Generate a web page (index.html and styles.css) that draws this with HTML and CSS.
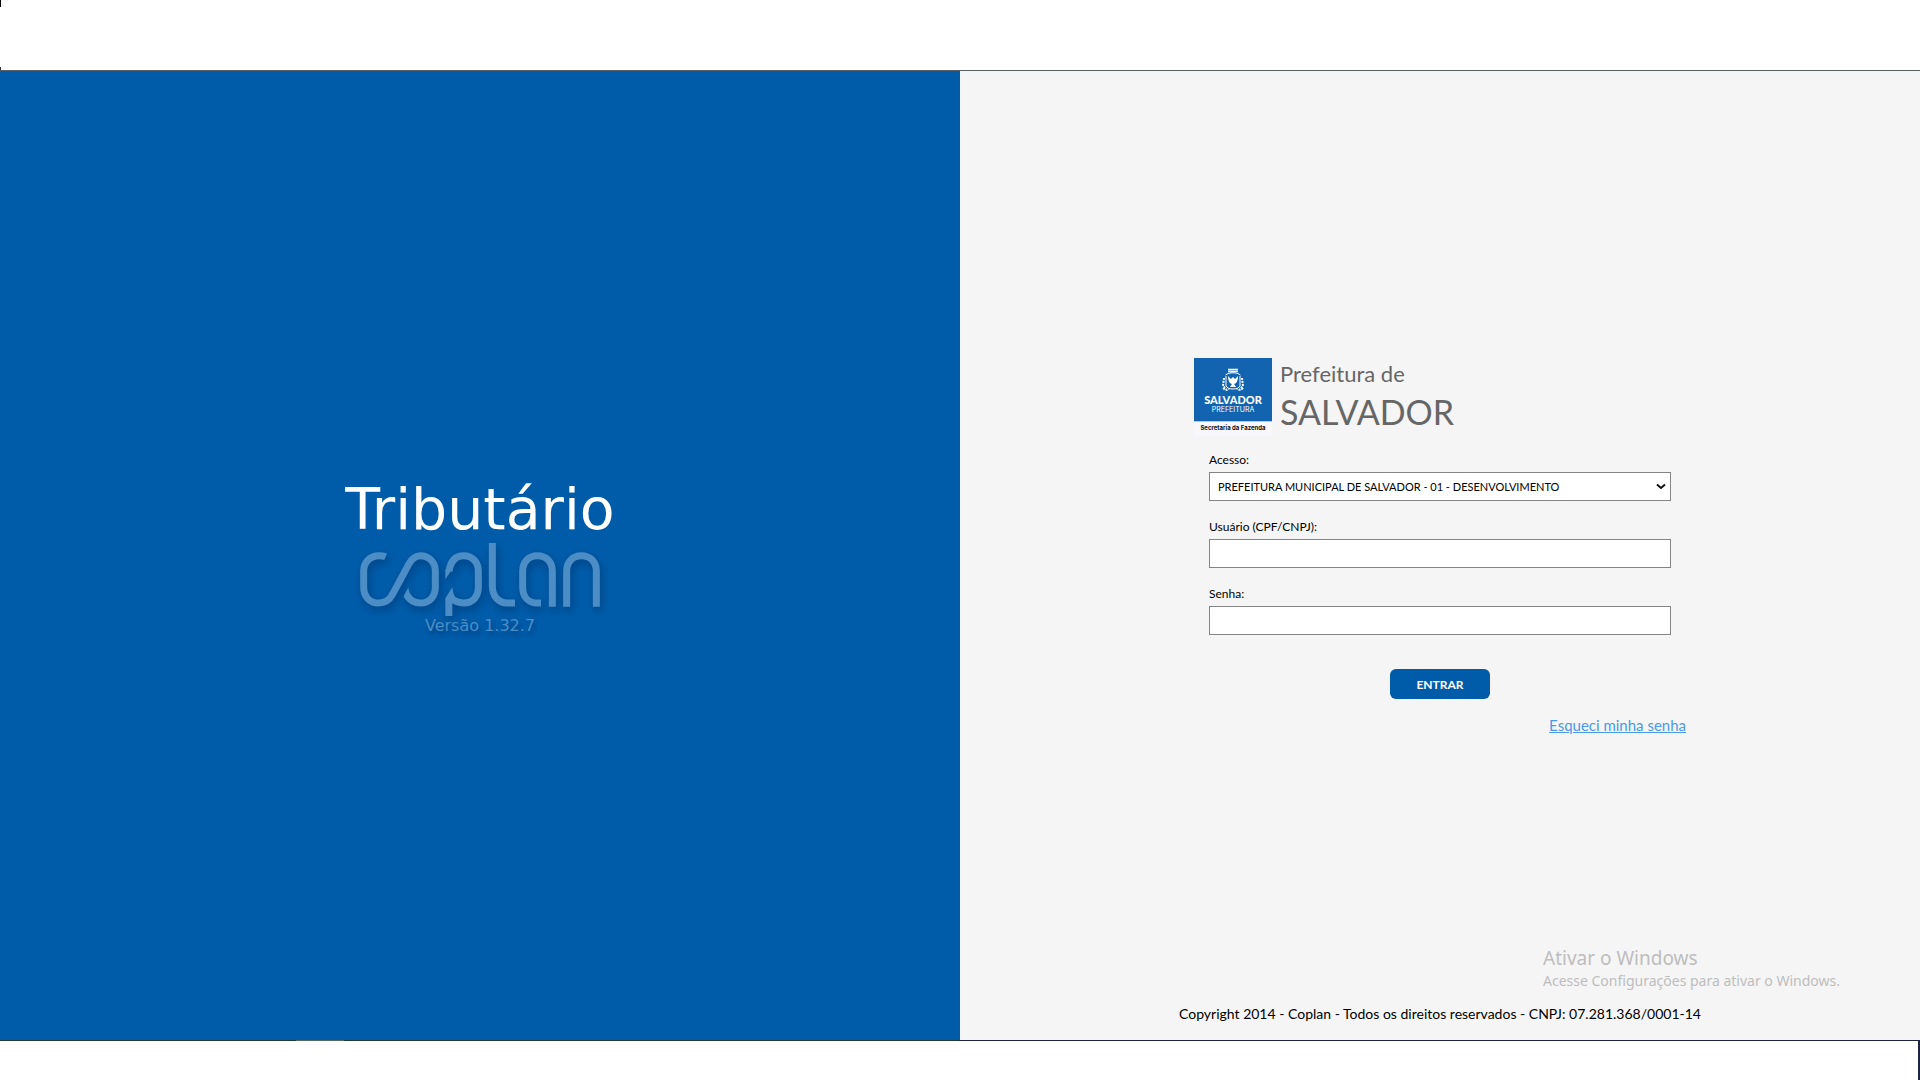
FILE: index.html
```html
<!DOCTYPE html>
<html lang="pt-BR">
<head>
<meta charset="utf-8">
<meta name="viewport" content="width=device-width, initial-scale=1">
<title>Tributário - Prefeitura de Salvador</title>
<link rel="stylesheet" href="styles.css">
</head>
<body>
<header class="top-strip"></header>
<main class="main">
  <section class="product">
    <h1 class="product-name">Tributário</h1>
    <svg class="coplan" viewBox="90 219 720 219" role="img" aria-label="Coplan">
      <g fill="none" stroke="currentColor" stroke-width="21">
        <path d="M167 260C160 257 153 257 146 257C118 257 101 279 101 303V352C101 379 118 399 146 399C166 399 178 391 187 374L236 283C245 266 255 257 271 257C299 257 316 279 316 303V352C316 379 299 399 271 399C253 399 240 391 231 376"/>
        <path d="M357 304C361 277 374 257 401 257C429 257 445 279 445 303V352C445 379 429 399 401 399C386 399 372 393 361 382"/>
        <path d="M487 219V347C487 379 506 399 532 399H555"/>
        <path d="M633 399H622C594 399 578 379 578 350V303C578 277 595 257 622 257C650 257 667 277 667 303V410"/>
        <path d="M710 410V303C710 277 727 257 754 257C782 257 799 277 799 303V410"/>
      </g>
      <g fill="currentColor">
        <path d="M235 352L221 379L229 391L245 378C239 371 236 363 235 352Z"/>
        <path d="M346 328V298L367 292Q366 298 363 303Z"/>
        <path d="M367 352L346 385V438H367V400L375 380Q368 370 367 352Z"/>
      </g>
    </svg>
    <p class="version">Versão 1.32.7</p>
  </section>
  <section class="access">
    <div class="login">
      <div class="brand">
        <svg class="brand-logo" viewBox="0 0 78 78" role="img" aria-label="Salvador Prefeitura">
          <rect width="78" height="78" fill="#f8f8fc"/>
          <rect width="78" height="63" fill="#1264b0"/>
          <rect y="63" width="78" height="1" fill="#a9c9e6"/>
          <g fill="none" stroke="#fff">
            <path d="M34 11.500h10M34 13.500h10" stroke-width="1.500"/>
            <path d="M31.500 17c4-3 11-3 15 0M32 18v10c2 4 12 4 14 0V18" stroke-width="1"/>
            <path d="M30 20l-1 8 3 3M48 20l1 8-3 3M29 30q3 3 6 1M49 30q-3 3-6 1" stroke-width="2" stroke-dasharray="2 1"/>
          </g>
          <path d="M34 18q0 7 4 8l-2 3h6l-2-3q4-1 4-8l-3 3-2-2-2 2Z" fill="#fff"/>
          <text x="39" y="46" class="logo-city">SALVADOR</text>
          <text x="39" y="54" class="logo-sub">PREFEITURA</text>
          <text x="39" y="72" class="logo-dept">Secretaria da Fazenda</text>
        </svg>
        <div class="brand-text">
          <p class="brand-kind">Prefeitura de</p>
          <p class="brand-city">SALVADOR</p>
        </div>
      </div>
      <form class="form">
        <div class="field">
          <label for="acesso">Acesso:</label>
          <div class="select-wrap">
            <select id="acesso" class="control"><option>PREFEITURA MUNICIPAL DE SALVADOR - 01 - DESENVOLVIMENTO</option></select>
            <svg class="chevron" viewBox="0 0 10 7" aria-hidden="true"><path d="M1 1.500L5 5L9 1.500" fill="none" stroke="#111" stroke-width="2"/></svg>
          </div>
        </div>
        <div class="field">
          <label for="usuario">Usuário (CPF/CNPJ):</label>
          <input id="usuario" class="control" type="text">
        </div>
        <div class="field">
          <label for="senha">Senha:</label>
          <input id="senha" class="control" type="password">
        </div>
        <button class="submit" type="button">ENTRAR</button>
      </form>
      <a class="forgot" href="#">Esqueci minha senha</a>
    </div>
    <p class="copyright">Copyright 2014 - Coplan - Todos os direitos reservados - CNPJ: 07.281.368/0001-14</p>
    <aside class="activation">
      <p class="activation-title">Ativar o Windows</p>
      <p class="activation-text">Acesse Configurações para ativar o Windows.</p>
    </aside>
  </section>
</main>
<footer class="bottom-strip"></footer>
</body>
</html>
```
FILE: styles.css
```css
* { box-sizing: border-box; }
body {
  margin: 0;
  min-height: 100vh;
  display: grid;
  grid-template-rows: 71px 1fr 40px;
  background: #fff;
  color: #000;
  font-family: Lato, "Liberation Sans", sans-serif;
}
h1, p { margin: 0; font-weight: 400; }
.top-strip {
  border-bottom: 1px solid #5b5f66;
  background:
    linear-gradient(#000, #000) 0 0 / 1px 7px no-repeat,
    linear-gradient(#333, #333) 0 100% / 1px 3px no-repeat;
}
.bottom-strip {
  border-right: 2px solid #1f2340;
  background:
    linear-gradient(#526a5c, #526a5c) 296px 0 / 48px 1px no-repeat,
    linear-gradient(90deg, #223a3c 50%, #1f2340 50%) 0 0 / 100% 1px no-repeat;
}
.main { display: grid; grid-template-columns: 1fr 1fr; }
.product {
  display: flex;
  flex-direction: column;
  align-items: center;
  justify-content: center;
  background: #005ca9;
  font-family: "DejaVu Sans", Verdana, sans-serif;
}
.product-name { color: #fff; font-size: 57px; line-height: 68px; }
.coplan {
  width: 240px;
  height: 73px;
  color: #4c8dc5;
  filter: drop-shadow(2px 4px 4px rgba(0, 30, 80, .4));
}
.version {
  color: #4c8dc5;
  font-size: 16px;
  line-height: 20px;
  text-shadow: 2px 4px 4px rgba(0, 30, 80, .4);
}
.access {
  position: relative;
  display: flex;
  flex-direction: column;
  align-items: center;
  background: #f5f5f5;
}
.login {
  flex: 1;
  width: 492px;
  max-width: 100%;
  display: flex;
  flex-direction: column;
  justify-content: center;
  padding-top: 18px;
}
.brand { display: flex; gap: 8px; color: #666; }
.brand-logo { width: 78px; height: 78px; flex: none; }
.logo-city, .logo-sub, .logo-dept { text-anchor: middle; }
.logo-city { font: 900 11px Lato, sans-serif; fill: #fff; }
.logo-sub { font: 400 7px Inter, sans-serif; fill: #fff; }
.logo-dept { font: 700 6px Inter, sans-serif; fill: #111; }
.brand-kind { font-size: 22px; line-height: 32px; }
.brand-city { font-size: 34px; line-height: 44px; }
.form { display: flex; flex-direction: column; padding: 16px 15px 0; }
.field { display: flex; flex-direction: column; margin-bottom: 18px; }
.field label { font-size: 12px; line-height: 16px; margin-bottom: 4px; }
.control {
  width: 100%;
  height: 29px;
  padding: 0 8px;
  border: 1px solid #858585;
  border-radius: 0;
  background: #fff;
  color: #000;
  font: 11px Lato, "Liberation Sans", sans-serif;
  appearance: none;
}
.select-wrap { position: relative; display: flex; }
.chevron { position: absolute; right: 5px; top: 11px; width: 10px; height: 7px; pointer-events: none; }
.submit {
  align-self: center;
  width: 100px;
  height: 30px;
  margin-top: 16px;
  padding: 0;
  border: 0;
  border-radius: 6px;
  background: #005ca9;
  color: #fff;
  font: 700 12px Lato, "Liberation Sans", sans-serif;
}
.forgot {
  align-self: flex-end;
  margin-top: 16px;
  color: #4a9ae8;
  font-size: 15px;
  line-height: 20px;
}
.copyright { font-size: 14px; line-height: 20px; padding-bottom: 16px; }
.activation {
  position: absolute;
  right: 80px;
  bottom: 48px;
  color: #bdbdbd;
  font-family: "Noto Sans", sans-serif;
}
.activation-title { font-size: 19px; line-height: 24px; }
.activation-text { font-size: 14px; line-height: 22px; }
```
